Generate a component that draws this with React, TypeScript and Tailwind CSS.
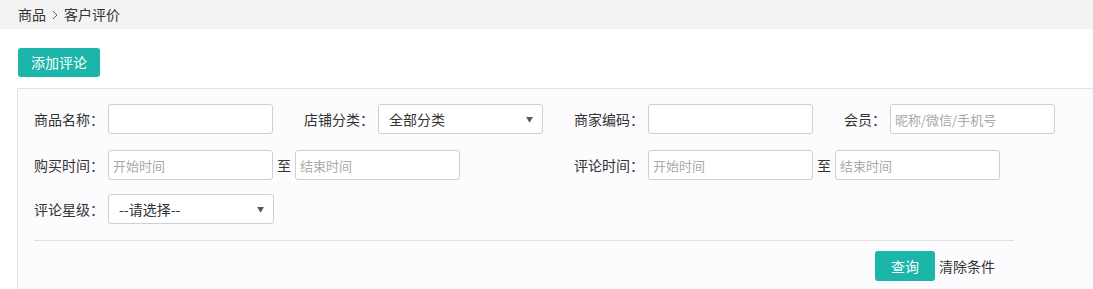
import React from "react";

const font = { fontFamily: '"Noto Sans CJK SC", "Noto Sans", sans-serif' };

function Label({ children }: { children: React.ReactNode }) {
  return <span className="text-[14px] text-[#333] leading-[30px] whitespace-nowrap">{children}</span>;
}

function TextInput({ placeholder }: { placeholder?: string }) {
  return (
    <input
      className="h-[30px] w-[165px] shrink-0 border border-[#cfcfcf] rounded-[3px] bg-white px-[4px] text-[13px] text-[#333] placeholder:text-[#a9a9a9] outline-none"
      placeholder={placeholder}
      style={font}
    />
  );
}

function Select({ text }: { text: string }) {
  return (
    <div className="h-[30px] w-[165px] shrink-0 border border-[#cfcfcf] rounded-[3px] bg-white flex items-center justify-between pl-[10px] pr-[9px]">
      <span className="text-[14px] text-[#333]">{text}</span>
      <span className="text-[7px] text-[#555]">▼</span>
    </div>
  );
}

export default function App() {
  return (
    <div className="w-[1093px] h-[289px] bg-white overflow-hidden" style={font}>
      <div className="h-[29px] bg-[#f3f3f3] flex items-center pl-[18px] text-[14px] text-[#333]">
        <span>商品</span>
        <svg width="6" height="10" viewBox="0 0 6 10" className="mx-[6px]">
          <path d="M1 1 L5 5 L1 9" fill="none" stroke="#666" strokeWidth="1" />
        </svg>
        <span>客户评价</span>
      </div>
      <div className="pl-[18px] pt-[19px]">
        <button className="h-[29px] px-[13px] bg-[#1bb5a9] text-white text-[14px] rounded-[3px]">添加评论</button>
      </div>
      <div className="ml-[17px] mt-[11px] h-[300px] bg-[#fcfbfe] border-t border-l border-[#e3e3e3] pl-[16px] pt-[15px]">
        <div className="flex h-[30px]">
          <div className="w-[270px] shrink-0 flex items-center gap-[4px]">
            <Label>商品名称：</Label>
            <TextInput />
          </div>
          <div className="w-[270px] shrink-0 flex items-center gap-[4px]">
            <Label>店铺分类：</Label>
            <Select text="全部分类" />
          </div>
          <div className="w-[270px] shrink-0 flex items-center gap-[4px]">
            <Label>商家编码：</Label>
            <TextInput />
          </div>
          <div className="w-[270px] shrink-0 flex items-center gap-[4px]">
            <Label>会员：</Label>
            <TextInput placeholder="昵称/微信/手机号" />
          </div>
        </div>
        <div className="flex h-[30px] mt-[16px]">
          <div className="w-[540px] shrink-0 flex items-center">
            <Label>购买时间：</Label>
            <span className="ml-[4px]"><TextInput placeholder="开始时间" /></span>
            <span className="mx-[4px] text-[14px] text-[#333]">至</span>
            <TextInput placeholder="结束时间" />
          </div>
          <div className="w-[540px] shrink-0 flex items-center">
            <Label>评论时间：</Label>
            <span className="ml-[4px]"><TextInput placeholder="开始时间" /></span>
            <span className="mx-[4px] text-[14px] text-[#333]">至</span>
            <TextInput placeholder="结束时间" />
          </div>
        </div>
        <div className="flex h-[30px] mt-[14px] items-center gap-[4px]">
          <Label>评论星级：</Label>
          <div className="h-[30px] w-[166px] border border-[#cfcfcf] rounded-[3px] bg-white flex items-center justify-between pl-[10px] pr-[9px]">
            <span className="text-[14px] text-[#333]">--请选择--</span>
            <span className="text-[7px] text-[#555]">▼</span>
          </div>
        </div>
        <div className="w-[980px] mt-[16px] border-t border-[#e0e0e0]"></div>
        <div className="w-[980px] flex justify-end items-center pr-[19px] mt-[10px]">
          <button className="h-[30px] w-[60px] bg-[#1bb5a9] text-white text-[14px] rounded-[3px]">查询</button>
          <span className="ml-[4px] text-[14px] text-[#333]">清除条件</span>
        </div>
      </div>
    </div>
  );
}
